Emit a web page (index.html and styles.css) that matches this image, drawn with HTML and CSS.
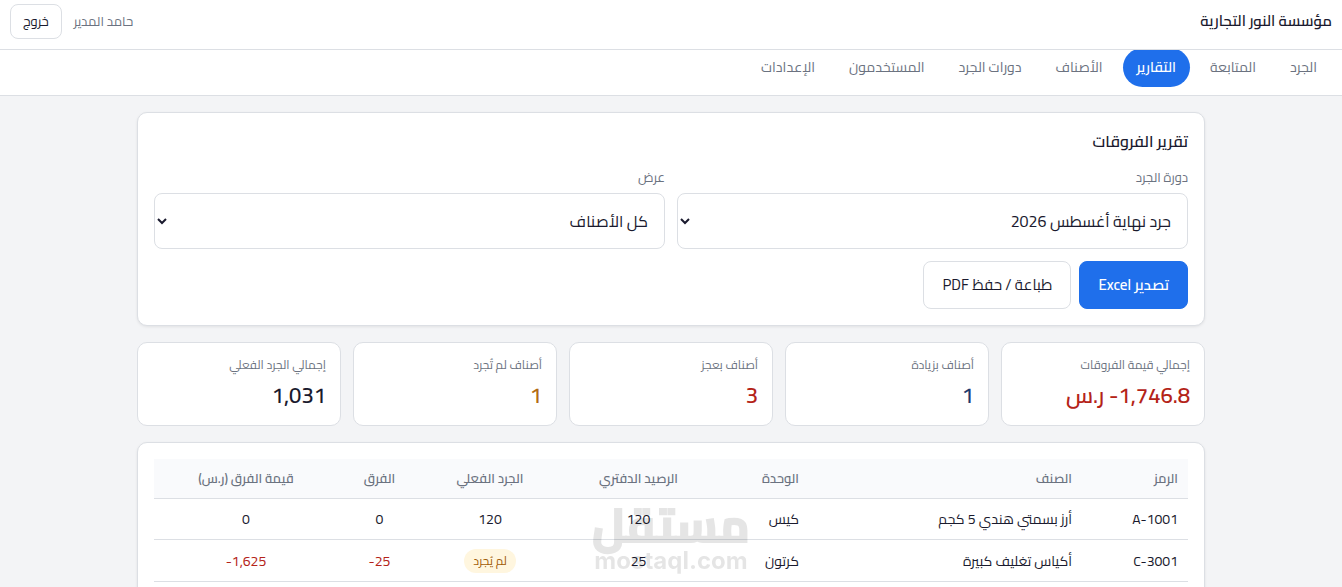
FILE: index.html
```html
<!DOCTYPE html>
<html lang="ar" dir="rtl">
<head>
  <meta charset="UTF-8">
  <meta name="viewport" content="width=device-width, initial-scale=1.0">
  <title>تقرير الفروقات</title>
  <link rel="stylesheet" href="styles.css">
</head>
<body>
  <!-- Top Bar -->
  <header class="topbar">
    <div class="brand">مؤسسة النور التجارية</div>
    <div class="user">
      <span class="user-name">حامد المدير</span>
      <button class="btn btn-small" type="button">خروج</button>
    </div>
  </header>

  <!-- Tabs -->
  <nav class="tabs">
    <a class="tab" href="#count">الجرد</a>
    <a class="tab" href="#follow">المتابعة</a>
    <a class="tab active" href="#reports">التقارير</a>
    <a class="tab" href="#items">الأصناف</a>
    <a class="tab" href="#cycles">دورات الجرد</a>
    <a class="tab" href="#users">المستخدمون</a>
    <a class="tab" href="#settings">الإعدادات</a>
  </nav>

  <main class="container">
    <!-- Filters -->
    <section class="card">
      <h2>تقرير الفروقات</h2>
      <div class="filters">
        <div class="field">
          <label for="cycle">دورة الجرد</label>
          <select id="cycle">
            <option>جرد نهاية أغسطس 2026</option>
          </select>
        </div>
        <div class="field">
          <label for="view">عرض</label>
          <select id="view">
            <option>كل الأصناف</option>
          </select>
        </div>
      </div>
      <div class="actions">
        <button class="btn btn-primary" type="button">تصدير Excel</button>
        <button class="btn" type="button">طباعة / حفظ PDF</button>
      </div>
    </section>

    <!-- Totals -->
    <section class="stats">
      <div class="stat">
        <div class="stat-label">إجمالي قيمة الفروقات</div>
        <div class="stat-value neg"><bdi dir="ltr">-1,746.8</bdi> ر.س</div>
      </div>
      <div class="stat">
        <div class="stat-label">أصناف بزيادة</div>
        <div class="stat-value pos">1</div>
      </div>
      <div class="stat">
        <div class="stat-label">أصناف بعجز</div>
        <div class="stat-value neg">3</div>
      </div>
      <div class="stat">
        <div class="stat-label">أصناف لم تُجرد</div>
        <div class="stat-value warn">1</div>
      </div>
      <div class="stat">
        <div class="stat-label">إجمالي الجرد الفعلي</div>
        <div class="stat-value">1,031</div>
      </div>
    </section>

    <!-- Report Table -->
    <section class="card">
      <table class="report">
        <colgroup>
          <col class="col-code">
          <col class="col-item">
          <col class="col-unit">
          <col class="col-book">
          <col class="col-actual">
          <col class="col-diff">
          <col class="col-value">
        </colgroup>
        <thead>
          <tr>
            <th>الرمز</th>
            <th>الصنف</th>
            <th>الوحدة</th>
            <th class="num">الرصيد الدفتري</th>
            <th class="num">الجرد الفعلي</th>
            <th class="num">الفرق</th>
            <th class="num">قيمة الفرق (ر.س)</th>
          </tr>
        </thead>
        <tbody>
          <tr>
            <td><bdi dir="ltr">A-1001</bdi></td>
            <td>أرز بسمتي هندي 5 كجم</td>
            <td>كيس</td>
            <td class="num">120</td>
            <td class="num">120</td>
            <td class="num">0</td>
            <td class="num">0</td>
          </tr>
          <tr>
            <td><bdi dir="ltr">C-3001</bdi></td>
            <td>أكياس تغليف كبيرة</td>
            <td>كرتون</td>
            <td class="num">25</td>
            <td class="num"><span class="badge">لم يُجرد</span></td>
            <td class="num neg"><bdi dir="ltr">-25</bdi></td>
            <td class="num neg"><bdi dir="ltr">-1,625</bdi></td>
          </tr>
        </tbody>
      </table>
    </section>
  </main>

  <!-- Watermark -->
  <div class="watermark">
    <span class="watermark-ar">مستقل</span>
    <span class="watermark-en" dir="ltr">mostaql.com</span>
  </div>
</body>
</html>
```
FILE: styles.css
```css
* {
  margin: 0;
  padding: 0;
  box-sizing: border-box;
}

html {
  scrollbar-width: none;
}

body {
  font-family: "Cairo", "DejaVu Sans Condensed", "DejaVu Sans", sans-serif;
  font-size: 15px;
  line-height: 24px;
  background-color: #f3f4f6;
  color: #1a1a2e;
}

button,
select {
  font: inherit;
  color: inherit;
}

/* Top Bar */
.topbar {
  position: sticky;
  top: 0;
  z-index: 2;
  display: flex;
  align-items: center;
  justify-content: space-between;
  height: 50px;
  padding: 0 10px 7px;
  background-color: #fff;
  border-bottom: 1px solid #dcdfe4;
}

.brand {
  font-weight: 600;
}

.user {
  display: flex;
  align-items: center;
  gap: 12px;
}

.user-name {
  font-size: 13px;
  color: #6b7280;
}

/* Tabs */
.tabs {
  display: flex;
  gap: 6px;
  margin-top: -10px;
  padding: 8px 11px;
  background-color: #fff;
  border-bottom: 1px solid #dcdfe4;
}

.tab {
  padding: 7px 14px 8px;
  border-radius: 20px;
  font-size: 14px;
  color: #6b7280;
  text-decoration: none;
}

.tab.active {
  background-color: #1f6feb;
  color: #fff;
  font-weight: 600;
}

/* Cards */
.container {
  display: flex;
  flex-direction: column;
  gap: 16px;
  max-width: 1100px;
  margin: 0 auto;
  padding: 16px;
}

.card {
  padding: 16px;
  background-color: #fff;
  border: 1px solid #dcdfe4;
  border-radius: 10px;
  box-shadow: 0 1px 3px rgba(0, 0, 0, 0.08);
}

.card h2 {
  margin-bottom: 12px;
  font-size: 16px;
  font-weight: 600;
}

/* Filters */
.filters {
  display: grid;
  grid-template-columns: 1fr 1fr;
  gap: 12px;
}

.field label {
  display: block;
  margin-bottom: 4px;
  font-size: 13px;
  color: #6b7280;
}

.field select {
  width: 100%;
  height: 56px;
  padding: 0 12px;
  background-color: #fff;
  border: 1px solid #dcdfe4;
  border-radius: 8px;
  font-size: 16px;
}

.actions {
  display: flex;
  gap: 8px;
  margin-top: 12px;
}

.btn {
  height: 48px;
  padding: 0 18px;
  background-color: #fff;
  border: 1px solid #dcdfe4;
  border-radius: 8px;
  cursor: pointer;
}

.btn-primary {
  background-color: #1f6feb;
  border-color: #1f6feb;
  color: #fff;
  font-weight: 600;
}

.btn-small {
  height: 35px;
  padding: 0 12px;
  font-size: 13px;
}

/* Totals */
.stats {
  display: grid;
  grid-template-columns: repeat(5, 1fr);
  gap: 12px;
}

.stat {
  height: 84px;
  padding: 10px 14px;
  background-color: #fff;
  border: 1px solid #dcdfe4;
  border-radius: 10px;
}

.stat-label {
  font-size: 12px;
  color: #6b7280;
}

.stat-value {
  font-size: 22px;
  font-weight: 600;
  line-height: 36px;
}

.pos {
  color: #1e3a6e;
}

.neg {
  color: #b42318;
}

.warn {
  color: #b36b14;
}

/* Report Table */
.report {
  width: 100%;
  table-layout: fixed;
  border-collapse: collapse;
  font-size: 14px;
}

.col-code { width: 106px; }
.col-item { width: 273px; }
.col-unit { width: 91px; }
.col-book { width: 159px; }
.col-actual { width: 138px; }
.col-diff { width: 83px; }
.col-value { width: 184px; }

.report th,
.report td {
  padding: 8px 10px;
  border-bottom: 1px solid #dcdfe4;
  text-align: right;
  white-space: nowrap;
}

.report th {
  padding: 7px 10px 8px;
  background-color: #f9fafc;
  font-size: 13px;
  font-weight: 600;
  color: #6b7280;
}

.report .num {
  text-align: center;
}

.badge {
  display: inline-block;
  padding: 0 9px;
  border-radius: 12px;
  background-color: #fff6df;
  color: #a15c07;
  font-size: 12px;
}

/* Watermark */
.watermark {
  position: fixed;
  right: 0;
  bottom: 12px;
  left: 0;
  z-index: 3;
  display: flex;
  flex-direction: column;
  align-items: center;
  color: #000;
  opacity: 0.1;
  font-weight: bold;
  pointer-events: none;
}

.watermark-ar {
  font-size: 46px;
  line-height: 44px;
  -webkit-text-stroke: 2px #000;
}

.watermark-en {
  font-family: "Inter", sans-serif;
  font-size: 24px;
  line-height: 28px;
}
```
